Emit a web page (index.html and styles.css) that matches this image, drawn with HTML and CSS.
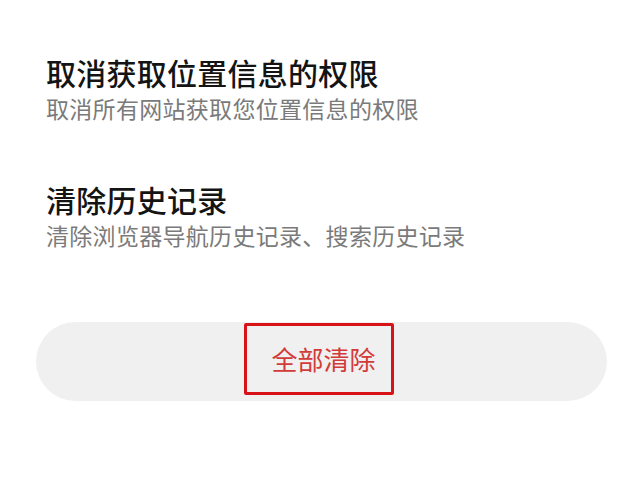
FILE: index.html
```html
<!DOCTYPE html>
<html lang="zh-CN">
<head>
<meta charset="utf-8">
<link rel="stylesheet" href="styles.css">
</head>
<body>
<div class="page">
  <div class="item">
    <div class="title">取消获取位置信息的权限</div>
    <div class="desc">取消所有网站获取您位置信息的权限</div>
  </div>
  <div class="item">
    <div class="title">清除历史记录</div>
    <div class="desc">清除浏览器导航历史记录、搜索历史记录</div>
  </div>
  <div class="actions">
    <button class="clear-btn"><span class="clear-label">全部清除</span></button>
  </div>
</div>
</body>
</html>
```
FILE: styles.css
```css
html, body {
  margin: 0;
  padding: 0;
  background: #ffffff;
}
body {
  width: 640px;
  height: 480px;
  overflow: hidden;
  font-family: "Noto Sans CJK SC", "Noto Sans", sans-serif;
}
.page {
  display: flex;
  flex-direction: column;
  padding: 53px 0 0 46px;
}
.item {
  display: flex;
  flex-direction: column;
  gap: 2px;
  margin-bottom: 57px;
}
.title {
  font-size: 30px;
  line-height: 38px;
  letter-spacing: 0.25px;
  color: #141414;
  font-weight: 500;
}
.desc {
  font-size: 23px;
  line-height: 30px;
  letter-spacing: 0.3px;
  color: #7a7a7a;
}
.actions {
  display: flex;
  margin-left: -10px;
  margin-top: 15px;
}
.clear-btn {
  width: 571px;
  height: 79px;
  border: none;
  border-radius: 40px;
  background: #f0f0f0;
  display: flex;
  justify-content: center;
  align-items: flex-start;
  padding: 1px 0 0 0;
  font-family: inherit;
}
.clear-label {
  display: block;
  box-sizing: border-box;
  width: 150px;
  height: 72px;
  border: 3px solid #d71318;
  border-radius: 2px;
  padding: 0 0 0 25px;
  margin-left: -6px;
  text-align: left;
  font-size: 26px;
  line-height: 66px;
  color: #d33a3a;
  white-space: nowrap;
}
```
